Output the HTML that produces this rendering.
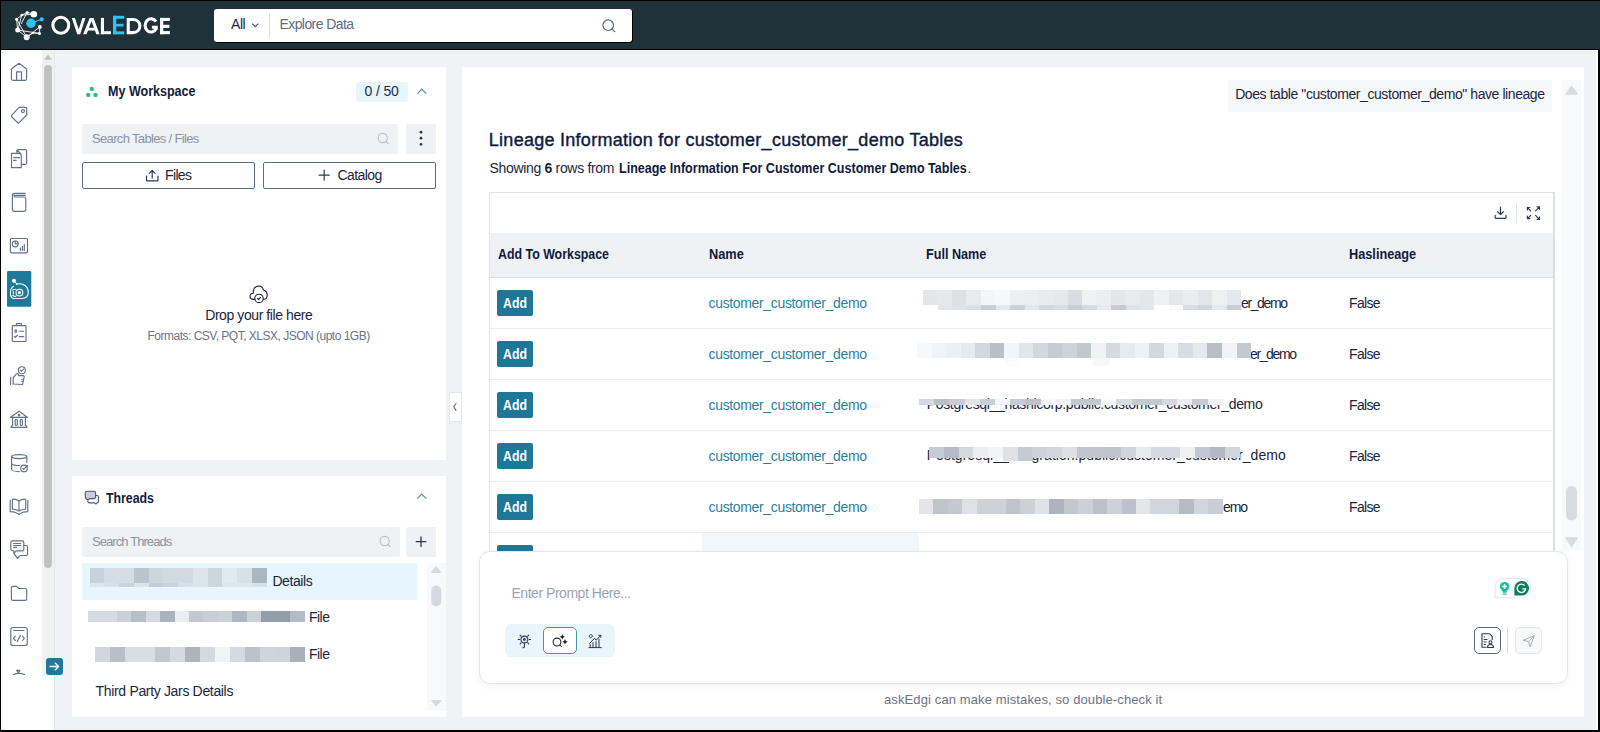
<!DOCTYPE html>
<html><head><meta charset="utf-8">
<style>
*{box-sizing:border-box;margin:0;padding:0}
html,body{width:1600px;height:732px;overflow:hidden;background:#000;font-family:"Liberation Sans",sans-serif;color:#1b2540}
.a{position:absolute}
.t{position:absolute;white-space:nowrap;line-height:normal}
svg{position:absolute;overflow:visible}
.ic{fill:none;stroke:#64718b;stroke-width:1.15;stroke-linecap:round;stroke-linejoin:round}
</style></head><body>
<div class="a" style="left:1px;top:1px;width:1599px;height:48px;background:#1f3139"></div>
<div class="a" style="left:1px;top:50px;width:1597px;height:680px;background:#f0f2f5"></div>
<div class="a" style="left:1596px;top:50px;width:2px;height:680px;background:#fff"></div>
<!-- logo -->
<svg style="left:0;top:0" width="200" height="50">
 <g stroke="#fff" stroke-width="0.9" fill="none">
  <path d="M33.8 14.3 L27.2 12.4 L21.7 15.1 L16.6 19.2 L17.7 30.1 L26.7 37.2 L33 32.9 L39.5 33.4 L39.8 26.9 M21.7 15.1 L33.8 14.3 M16.6 19.2 L26.7 37.2 M21.7 15.1 L17.7 30.1 M17.7 30.1 L39.5 33.4 M26.7 37.2 L39.8 26.9 M27.2 12.4 L21 24"/>
 </g>
 <g fill="#fff">
  <circle cx="33.8" cy="14.3" r="3.3"/><circle cx="27.2" cy="12.4" r="1.5"/><circle cx="21.7" cy="15.1" r="1.3"/>
  <circle cx="16.6" cy="19.2" r="1.5"/><circle cx="17.7" cy="30.1" r="2.5"/><circle cx="26.7" cy="37.2" r="3"/>
  <circle cx="39.8" cy="26.9" r="2"/><circle cx="39.5" cy="33.4" r="1.5"/><circle cx="33" cy="32.9" r="1.2"/>
 </g>
 <circle cx="31" cy="23.3" r="4.7" fill="#2ec4f0"/>
 <circle cx="41.7" cy="19.3" r="2.1" fill="#2ec4f0"/>
 <path d="M31 23.3 L41.7 19.3" stroke="#2ec4f0" stroke-width="1.2"/>
 <ellipse cx="60.8" cy="25.25" rx="7.95" ry="7.95" fill="none" stroke="#fff" stroke-width="3.1"/>
 <g fill="#fff">
  <path d="M71.8 17.9 H74.9 L78.7 29.3 L82.4 17.9 H85.4 L80.2 34.2 H77.2 Z"/>
  <path fill-rule="evenodd" d="M83.1 34.2 L89.7 17.9 H93.6 L99.6 34.2 H96.3 L94.9 30.4 H88 L86.5 34.2 Z M88.9 27.8 H94 L91.5 21.2 Z"/>
  <rect x="100.9" y="17.9" width="3.1" height="16.3"/><rect x="100.9" y="31.2" width="10" height="3"/>
  <rect x="160.1" y="17.9" width="3.2" height="16.3"/><rect x="160.1" y="17.9" width="9.8" height="3.1"/><rect x="160.1" y="24.8" width="9.3" height="3.2"/><rect x="160.1" y="31.1" width="9.8" height="3.1"/>
 </g>
 <g fill="none" stroke="#fff" stroke-width="3.1">
  <path d="M128.25 19.45 V32.65 H132.6 C137.3 32.65 139.85 29.8 139.85 26.05 C139.85 22.3 137.3 19.45 132.6 19.45 Z"/>
  <path d="M156 21.6 A6 6.6 0 1 0 156.25 28.8 V27.3 H151.9"/>
 </g>
 <g fill="#2ec4f0">
  <rect x="113" y="15.8" width="3.3" height="18.5"/><rect x="113" y="15.8" width="11.2" height="2.95"/><rect x="113" y="23.8" width="10.5" height="2.7"/><rect x="113" y="31.4" width="11.2" height="2.9"/>
 </g>
</svg>


<div class="a" style="left:214px;top:9px;width:418px;height:33px;background:#fff;border-radius:3px;box-shadow:1px 1px 0 #000"></div>
<svg style="left:250px;top:21px" width="10" height="8"><path d="M2.2 2.6 L5.2 5.6 L8.2 2.6" fill="none" stroke="#4a5570" stroke-width="1.1"/></svg>
<div class="a" style="left:269px;top:13px;width:1px;height:25px;background:#d8dce4"></div>
<svg style="left:600px;top:17px" width="20" height="20"><circle cx="8.2" cy="8.2" r="5.3" fill="none" stroke="#5a6782" stroke-width="1.2"/><path d="M12 12 L14.8 14.6" stroke="#5a6782" stroke-width="1.2" stroke-linecap="round"/></svg>
<div class="a" style="left:1px;top:50px;width:53px;height:680px;background:#fff"></div>
<div class="a" style="left:42px;top:50px;width:12px;height:626px;background:#f1f1f1"></div>
<div class="a" style="left:54px;top:50px;width:1px;height:680px;background:#e2e5ea"></div>
<svg style="left:42px;top:50px" width="12" height="626"><path d="M2.2 9.7 L6 4.2 L9.8 9.7 Z" fill="#c1c1c1"/><rect x="2.1" y="14.9" width="7.8" height="503" rx="3.9" fill="#c1c1c1"/></svg>
<!-- rail icons -->
<svg style="left:0;top:0" width="42" height="732">
<g class="ic">
 <g transform="translate(4,58)"><path d="M7.4 11 L15 5.3 L22.6 11 V20.8 Q22.6 22.3 21.1 22.3 H8.9 Q7.4 22.3 7.4 20.8 Z M12.6 22.3 V13.9 H17.5 V22.3"/></g>
 <g transform="translate(4,100)"><path d="M15 7.4 H21.5 Q22.7 7.4 22.7 8.6 V15 L14.3 23.4 L7.9 17 Q7.1 16.1 7.9 15.2 Z"/><circle cx="19" cy="11.1" r="1.5"/></g>
 <g transform="translate(4,143)"><path d="M7.5 10.3 H15.6 L17.3 12 V24.6 H7.5 Z M12.8 10.3 V7.8 Q12.8 6.6 14 6.6 H21.4 Q22.6 6.6 22.6 7.8 V20.1 Q22.6 21.3 21.4 21.3 H17.3 M13 7 L17 10.8 M9.6 14.6 H15.6 M9.6 17.4 H12.2"/></g>
 <g transform="translate(4,187)"><path d="M21.3 6.3 H10.4 Q8.4 6.3 8.4 8.4 V22.2 Q8.4 24.3 10.6 24.3 H19.7 Q21.8 24.3 21.8 22.2 V11.8 Q21.8 10 20 10 H11.3 Q10 10 10 8.6 Q10 7.6 11.3 8.3 H21.3"/></g>
 <g transform="translate(4,230)"><rect x="6.4" y="8.5" width="17.1" height="14.3" rx="1.3"/><circle cx="11.2" cy="13.9" r="2.9"/><path d="M11.2 11 V13.9 H14.1 M16.4 20.5 V18 M18.4 20.5 V16.3 M20.3 20.5 V14.6"/></g>
 <g transform="translate(4,318)"><rect x="8.3" y="7.6" width="13.7" height="15.9" rx="0.8"/><path d="M12.4 7.6 V5.6 H17.4 V7.6 M15.3 13.2 H19.7 M15.3 18.6 H19.7 M10.4 18.4 L11.2 19.3 L13.6 17.2"/><ellipse cx="11.7" cy="13.1" rx="0.9" ry="1.3"/></g>
 <g transform="translate(4,361)"><circle cx="17.9" cy="9.2" r="3.5"/><path d="M16.3 9.2 L17.5 10.4 L19.6 8.2 M6.6 16.2 V23.6 M9.2 16.5 L12.8 12.7 L14.4 12.7 V14.6 H19.6 L20.2 15.6 L18.6 23.5 L9.2 23 V16.5 M18.6 18.2 H17.6 M19 20.3 H17.9"/></g>
 <g transform="translate(4,404)"><path d="M6.6 13.3 L15 7.3 L23.4 13.3 Z M8.6 13.3 V21.5 Q7 21.8 7 23.3 H23 Q23 21.8 21.4 21.5 V13.3"/><rect x="11.2" y="15.2" width="2.1" height="6.3" rx="1"/><rect x="16.3" y="15.2" width="2.1" height="6.3" rx="1"/><circle cx="15" cy="11" r="0.8"/></g>
 <g transform="translate(4,448)"><ellipse cx="15.2" cy="8.6" rx="7.6" ry="2"/><path d="M7.6 8.6 V21.5 Q8 23.5 15.3 23.6 M7.6 15.8 Q9 17.5 15.4 17.5 M22.8 8.6 V14.6"/><circle cx="20" cy="20.4" r="3.3"/><path d="M18.7 20.5 L19.7 21.3 L23.4 17.5"/></g>
 <g transform="translate(4,491)"><path d="M8.4 8.2 Q12 7.8 15 10 V20 Q12 18 8.4 18.3 Z M15 10 Q18 7.8 21.7 8.2 V18.3 Q18 18 15 20 M6.2 9.3 V20.7 Q11 20.6 13.8 22.6 L15 23.4 L16.2 22.6 Q19 20.6 23.8 20.7 V9.3"/></g>
 <g transform="translate(4,534)"><path d="M8.5 6.8 H18.2 Q19.8 6.8 19.8 8.4 V15.2 Q19.8 16.8 18.2 16.8 H12.2 L9.8 19.4 V16.8 Q6.8 16.8 6.8 15 V8.5 Q6.8 6.8 8.5 6.8 Z M9.6 9.5 H16.8 M9.6 11.5 H16.8 M9.6 13.4 H12.6 M19.8 11.5 H22 Q23.5 11.5 23.5 13 V19.9 Q23.5 21.5 22 21.5 H16.3 L13.4 24.4 L10 19.4"/></g>
 <g transform="translate(4,578)"><path d="M7.4 20.8 V9.9 Q7.4 8.4 8.9 8.4 H12.5 L14.6 10.5 H21.1 Q22.7 10.5 22.7 12.1 V20.8 Q22.7 22.4 21.1 22.4 H9 Q7.4 22.4 7.4 20.8 Z"/></g>
 <g transform="translate(4,621)"><rect x="6.8" y="6.5" width="16.5" height="18" rx="2"/><path d="M9.6 9.5 H19.9 M11.4 15.2 L9.5 17.4 L11.4 19.5 M18.5 15.2 L20.3 17.4 L18.5 19.5 M16.5 14.3 L13.3 20.5"/></g>
 <g transform="translate(4,656)"><path d="M9.5 18.6 Q15 16 20.5 18.6 M12.6 14.4 H16 L14.3 16.6 Z"/></g>
</g>
<rect x="7" y="271" width="24.3" height="35.8" rx="1.2" fill="#1e7a99"/>
<g fill="none" stroke="#fff" stroke-width="1.1">
 <path d="M16 284.6 Q19.5 283 23.2 284.6 Q28.4 287 28.3 292.6 Q28.1 298.3 22 298.5 H13.8 Q10.4 298.2 10.4 293 Q10.4 287.8 14 286"/>
 <path d="M16.2 289.2 Q13 289 12.2 290.5 M16.2 296.4 Q13 296.6 12.2 295"/>
 <path d="M13.3 291.2 V294.2"/>
 <path d="M14.6 281.8 L17.2 284.2"/>
 <circle cx="14" cy="280.8" r="1.4" fill="#fff"/>
 <circle cx="19.4" cy="292.6" r="3.4"/><circle cx="19.4" cy="292.6" r="1" fill="#fff"/>
</g>
</svg>

<div class="a" style="left:46px;top:658px;width:17px;height:17px;background:#1e7a99;border-radius:3px"></div>
<svg style="left:46px;top:658px" width="17" height="17"><path d="M4 8.5 H12.5 M9.3 5.3 L12.6 8.5 L9.3 11.7" fill="none" stroke="#fff" stroke-width="1.4" stroke-linecap="round" stroke-linejoin="round"/></svg>
<div class="a" style="left:72px;top:67px;width:374px;height:393px;background:#fff"></div>
<svg style="left:80px;top:78px" width="20" height="20"><g fill="#2bbd7e"><circle cx="11.8" cy="10.9" r="2.2"/><circle cx="8.25" cy="16.9" r="2.2"/><circle cx="15.5" cy="16.9" r="2.2"/></g></svg>
<div class="a" style="left:356px;top:82px;width:52px;height:20px;background:#e6f6fc;border-radius:3px"></div>
<svg style="left:410px;top:82px" width="20" height="20"><path d="M7.4 11.7 L11.8 7.2 L16.2 11.7" fill="none" stroke="#4b91ab" stroke-width="1.2"/></svg>
<div class="a" style="left:82px;top:124px;width:316px;height:30px;background:#f0f1f4;border-radius:2px"></div>
<svg style="left:370px;top:126px" width="24" height="24"><circle cx="12.7" cy="12" r="4.6" fill="none" stroke="#b9bfca" stroke-width="1.1"/><path d="M16 15.5 L18 17.5" stroke="#b9bfca" stroke-width="1.1" stroke-linecap="round"/></svg>
<div class="a" style="left:406px;top:124px;width:30px;height:30px;background:#f0f1f4;border-radius:2px"></div>
<svg style="left:406px;top:124px" width="30" height="30"><g fill="#2a3450"><circle cx="15" cy="8.2" r="1.35"/><circle cx="15" cy="14.2" r="1.35"/><circle cx="15" cy="20.3" r="1.35"/></g></svg>
<div class="a" style="left:82px;top:162px;width:173px;height:27px;border:1px solid #5d6b88;border-radius:2px;background:#fff"></div>
<div class="a" style="left:263px;top:162px;width:173px;height:27px;border:1px solid #5d6b88;border-radius:2px;background:#fff"></div>
<svg style="left:140px;top:165px" width="24" height="22"><g fill="none" stroke="#2b3a5c" stroke-width="1.2" stroke-linecap="round" stroke-linejoin="round"><path d="M6.5 11 V15.2 Q6.5 15.9 7.2 15.9 H17.3 Q18 15.9 18 15.2 V11 M12.2 13 V5.6 M9.3 8.4 L12.2 5.5 L15.1 8.4"/></g></svg>
<svg style="left:316px;top:167px" width="16" height="16"><g stroke="#2b3a5c" stroke-width="1.2" stroke-linecap="round"><path d="M8.2 3 V13.2 M3.1 8.1 H13.3"/></g></svg>
<svg style="left:246px;top:282px" width="26" height="24"><g fill="none" stroke="#1b2540" stroke-width="1.1" stroke-linecap="round" stroke-linejoin="round"><path d="M8.6 17.4 H6.8 Q4 17.2 4 14.3 Q4 11.3 7.3 11.2 Q7 4.2 12.8 4 Q16.6 4 17.4 8 Q21.2 9.2 21.2 13.2 Q21 17.2 17.6 17.4"/><circle cx="13" cy="16.4" r="4.2"/><path d="M11.4 16.4 L12.5 17.5 L14.6 15.3"/></g></svg>
<div class="a" style="left:72px;top:476px;width:374px;height:241px;background:#fff"></div>
<svg style="left:82px;top:486px" width="20" height="22"><g fill="none" stroke="#4b5878" stroke-width="1.1" stroke-linejoin="round"><path d="M5 5.2 H12 Q13.6 5.2 13.6 6.8 V11 Q13.6 12.6 12 12.6 H7.6 L6 14 Q3.3 13 3.3 10.5 V6.8 Q3.3 5.2 5 5.2 Z" fill="#c9cfda"/><path d="M13.6 9.5 H15 Q16.5 9.5 16.5 11 V15.3 Q16.5 16.9 15 16.9 L14 18 L12.6 16.9 H7.5 Q5.7 16.9 5.6 14.6"/></g></svg>
<svg style="left:410px;top:487px" width="20" height="20"><path d="M7.4 11.7 L11.8 7.2 L16.2 11.7" fill="none" stroke="#4b91ab" stroke-width="1.2"/></svg>
<div class="a" style="left:82px;top:527px;width:318px;height:30px;background:#f0f1f4;border-radius:2px"></div>
<svg style="left:372px;top:529px" width="24" height="24"><circle cx="12.7" cy="12" r="4.6" fill="none" stroke="#b9bfca" stroke-width="1.1"/><path d="M16 15.5 L18 17.5" stroke="#b9bfca" stroke-width="1.1" stroke-linecap="round"/></svg>
<div class="a" style="left:406px;top:527px;width:30px;height:30px;background:#f0f1f4;border-radius:2px"></div>
<svg style="left:406px;top:527px" width="30" height="30"><g stroke="#2b3a5c" stroke-width="1.3" stroke-linecap="round"><path d="M15 10 V19.5 M10.2 14.7 H19.8"/></g></svg>
<div class="a" style="left:82px;top:563px;width:335px;height:37px;background:#e6f6fc"></div>
<div class="a" style="left:427px;top:563px;width:19px;height:148px;background:#f8f9fa"></div>
<svg style="left:427px;top:563px" width="19" height="148"><path d="M4.5 9.5 L9.2 3.8 L13.9 9.5 Z" fill="#d5d9df" stroke="#d5d9df" stroke-width="1" stroke-linejoin="round"/><rect x="4.2" y="22.5" width="10" height="21" rx="5" fill="#d5d9df"/><path d="M4.5 137.5 L9.2 143.2 L13.9 137.5 Z" fill="#d5d9df" stroke="#d5d9df" stroke-width="1" stroke-linejoin="round"/></svg>
<div class="a" style="left:449px;top:392px;width:13px;height:30px;background:#fff;border:1px solid #e4e7ec"></div>
<svg style="left:449px;top:392px" width="13" height="30"><path d="M7.3 11 L4.7 14.8 L7.3 18.6" fill="none" stroke="#5d6b8a" stroke-width="1.1"/></svg>
<div class="a" style="left:462px;top:67px;width:1122px;height:650px;background:#fff"></div>
<div class="a" style="left:1228px;top:80px;width:324px;height:32px;background:#f7f8fa"></div>
<div class="a" style="left:489px;top:192px;width:1066px;height:370px;border:1px solid #dfe3e8;border-right:2px solid #dcdfe4;border-bottom:none"></div>
<svg style="left:1485px;top:198px" width="70" height="32"><g fill="none" stroke="#2b3a5c" stroke-width="1.2" stroke-linecap="round" stroke-linejoin="round"><path d="M15.5 9.2 V16.5 M12.6 13.6 L15.5 16.5 L18.4 13.6 M10.2 17.4 V19.6 Q10.2 20.3 10.9 20.3 H20.3 Q21 20.3 21 19.6 V17.4"/><path d="M45.7 12.9 L42.4 9.5 M42.4 9.5 V12 M42.4 9.5 H44.9 M50.5 12.9 L54.5 8.8 M54.5 8.8 V11.3 M54.5 8.8 H52 M45.7 17.3 L42.4 20.6 M42.4 20.6 V18.1 M42.4 20.6 H44.9 M50.5 17.3 L54.5 21.3 M54.5 21.3 V18.8 M54.5 21.3 H52"/></g></svg>
<div class="a" style="left:1516px;top:203px;width:1px;height:20px;background:#e3e6ea"></div>
<div class="a" style="left:490px;top:233px;width:1063px;height:45px;background:#f0f1f4;border-bottom:1px solid #dde1e7"></div>
<div class="a" style="left:497px;top:290px;width:36px;height:26px;background:#1e7797;border-radius:2px"></div>
<div class="a" style="left:490px;top:328px;width:1064px;height:1px;background:#e9ecf0"></div>
<div class="a" style="left:497px;top:341px;width:36px;height:26px;background:#1e7797;border-radius:2px"></div>
<div class="a" style="left:490px;top:379px;width:1064px;height:1px;background:#e9ecf0"></div>
<div class="a" style="left:497px;top:392px;width:36px;height:26px;background:#1e7797;border-radius:2px"></div>
<div class="a" style="left:490px;top:430px;width:1064px;height:1px;background:#e9ecf0"></div>
<div class="a" style="left:497px;top:443px;width:36px;height:26px;background:#1e7797;border-radius:2px"></div>
<div class="a" style="left:490px;top:481px;width:1064px;height:1px;background:#e9ecf0"></div>
<div class="a" style="left:497px;top:494px;width:36px;height:26px;background:#1e7797;border-radius:2px"></div>
<div class="a" style="left:490px;top:532px;width:1064px;height:1px;background:#e9ecf0"></div>
<div class="a" style="left:702px;top:533px;width:217px;height:18px;background:#f0f8fb"></div>
<div class="a" style="left:497px;top:545px;width:36px;height:10px;background:#1e7797;border-radius:2px"></div>
<div class="a" style="left:1562px;top:80px;width:19px;height:471px;background:#f8f9fa"></div>
<svg style="left:1562px;top:80px" width="19" height="471"><g fill="#d8dbe0" stroke="#d8dbe0" stroke-width="1.5" stroke-linejoin="round"><path d="M4 14 L9.5 6.8 L15 14 Z"/><path d="M4 458 L9.5 466 L15 458 Z"/></g><rect x="4" y="406" width="11" height="34.4" rx="5.5" fill="#d8dbe0"/></svg>
<div class="a" style="left:479px;top:551px;width:1089px;height:133px;background:#fff;border:1px solid #e3e6eb;border-radius:11px;box-shadow:0 2px 8px rgba(0,0,0,0.05)"></div>
<div class="a" style="left:505px;top:624.4px;width:110px;height:33px;background:#e8f6fc;border-radius:6px"></div>
<div class="a" style="left:543px;top:627.4px;width:34px;height:26.4px;background:#fff;border:1.3px solid #4a93ad;border-radius:5px"></div>
<svg style="left:500px;top:618px" width="120" height="46"><g fill="none" stroke="#2b3a5c" stroke-width="1.1" stroke-linecap="round">
<circle cx="24.4" cy="21.5" r="3.4"/><circle cx="24.4" cy="21.5" r="0.9"/><path d="M24.4 25 V28.5 Q24.4 30 23 29.6 M18.2 21.5 H19.6 M29.2 21.5 H30.6 M20.1 17.2 L21 18.2 M28.7 17.2 L27.8 18.2 M20.1 25.8 L21 24.8 M28.7 25.8 L27.8 24.8"/>
</g>
<g fill="none" stroke="#222" stroke-width="1.05" stroke-linecap="round"><circle cx="57" cy="24" r="3.9"/><path d="M60 27 L61.5 28.5"/></g>
<g fill="#222"><path d="M62.3 16 L63.2 17.9 L65 18.8 L63.2 19.7 L62.3 21.6 L61.4 19.7 L59.6 18.8 L61.4 17.9 Z"/><path d="M65 21 L65.9 22.9 L67.7 23.8 L65.9 24.7 L65 26.6 L64.1 24.7 L62.3 23.8 L64.1 22.9 Z"/></g>
<g fill="none" stroke="#2b3a5c" stroke-width="1" stroke-linecap="round" stroke-linejoin="round"><path d="M89 29.6 H101.3 M90.2 29.6 V26.6 M93 29.6 V24.5 M96 29.6 V23.5 M99 29.6 V21 M89.5 25.5 L94.5 20.3 L96.2 22.2 L100.8 17.3 M98.7 17.3 H100.8 V19.4"/><path d="M89.2 18 L91 16.4 L92.8 18 L91 19.6 Z"/></g>
</svg>
<svg style="left:1490px;top:574px" width="48" height="30"><path d="M5 24 V14 Q5 4.4 14.6 4.4 H30.8 Q40.6 4.4 40.6 14 Q40.6 23.9 30.8 23.9 Z" fill="#fff" stroke="#dde1e6" stroke-width="0.8"/>
<circle cx="14.6" cy="12.6" r="4.7" fill="#15c39a"/><path d="M12 16 L13 18.8 H16.2 L17.2 16 Z" fill="#15c39a"/><rect x="12.6" y="19.5" width="4" height="1.2" fill="#15c39a"/><path d="M14.6 10.3 V14.9 M12.3 12.6 H16.9" stroke="#fff" stroke-width="1.5"/>
<path d="M24.4 21.6 V14.2 A7.3 7.3 0 1 1 31.7 21.6 Z" fill="#0e7e5e"/><path d="M34.6 11.5 A4.2 4.2 0 1 0 35.6 14.8 H32.3" fill="none" stroke="#fff" stroke-width="1.3"/></svg>
<div class="a" style="left:1474px;top:627px;width:27px;height:27px;border:1.3px solid #5b6885;border-radius:5px;background:#fff"></div>
<svg style="left:1474px;top:627px" width="27" height="27"><g fill="none" stroke="#2b3a5c" stroke-width="1.1" stroke-linejoin="round"><path d="M15.8 6.8 H8 V20.3 H12.5 M15.8 6.8 L18.2 9.4 V13"/><path d="M9.7 10 H11 M9.7 12.5 H13.5 M9.7 15 H12.5 M9.7 17.5 H12"/><circle cx="16.5" cy="15.3" r="1.5"/><path d="M13.5 20.5 Q13.5 17.5 16.5 17.5 Q19.5 17.5 19.5 20.5 Z"/></g></svg>
<div class="a" style="left:1507px;top:627px;width:1px;height:27px;background:#d8dce3"></div>
<div class="a" style="left:1515.4px;top:627px;width:26.2px;height:26.7px;border:1px solid #e2e5ea;border-radius:5px;background:#f8f9fb"></div>
<svg style="left:1515px;top:627px" width="27" height="27"><path d="M8 13.3 L19.3 8.7 L15 20 L13.6 14.6 Z M13.6 14.6 L19.3 8.7" fill="none" stroke="#a9b0bd" stroke-width="1" stroke-linejoin="round"/></svg>
<div class="t" style="left:231px;top:16.12px;font-size:14px;color:#1b2540;letter-spacing:-0.431px;">All</div>
<div class="t" style="left:279.5px;top:16.12px;font-size:14px;color:#5f6b85;letter-spacing:-0.585px;">Explore Data</div>
<div class="t" style="left:108px;top:83.12px;font-size:14px;color:#0f1b3d;font-weight:700;transform:scaleX(0.8949);transform-origin:0 0;">My Workspace</div>
<div class="t" style="left:364.6px;top:83.02px;font-size:14px;color:#1b2b4b;letter-spacing:-0.166px;">0 / 50</div>
<div class="t" style="left:92px;top:131.04px;font-size:13px;color:#8a93a6;letter-spacing:-0.657px;">Search Tables / Files</div>
<div class="t" style="left:165px;top:167.12px;font-size:14px;color:#1b2540;letter-spacing:-0.641px;">Files</div>
<div class="t" style="left:337.4px;top:167.12px;font-size:14px;color:#1b2540;letter-spacing:-0.544px;">Catalog</div>
<div class="t" style="left:205.2px;top:306.72px;font-size:14px;color:#1b2540;letter-spacing:-0.421px;">Drop your file here</div>
<div class="t" style="left:147.5px;top:328.86px;font-size:12px;color:#6b7489;letter-spacing:-0.503px;">Formats: CSV, PQT, XLSX, JSON (upto 1GB)</div>
<div class="t" style="left:105.9px;top:489.92px;font-size:14px;color:#0f1b3d;font-weight:700;transform:scaleX(0.8794);transform-origin:0 0;">Threads</div>
<div class="t" style="left:92px;top:534.14px;font-size:13px;color:#8a93a6;letter-spacing:-0.920px;">Search Threads</div>
<div class="t" style="left:272.4px;top:573.12px;font-size:14px;color:#1b2540;letter-spacing:-0.416px;">Details</div>
<div class="t" style="left:309px;top:609.12px;font-size:14px;color:#1b2540;letter-spacing:-0.521px;">File</div>
<div class="t" style="left:309px;top:646.12px;font-size:14px;color:#1b2540;letter-spacing:-0.521px;">File</div>
<div class="t" style="left:95.6px;top:682.62px;font-size:14px;color:#1b2540;letter-spacing:-0.334px;">Third Party Jars Details</div>
<div class="t" style="left:1235.2px;top:86.12px;font-size:14px;color:#1b2540;letter-spacing:-0.425px;">Does table "customer_customer_demo" have lineage</div>
<div class="t" style="left:488.8px;top:130.44px;font-size:18px;color:#0f1b3d;letter-spacing:0.271px;-webkit-text-stroke:0.4px #0f1b3d;">Lineage Information for customer_customer_demo Tables</div>
<div class="t" style="left:489.5px;top:159.92px;font-size:14px;color:#1b2540;letter-spacing:-0.324px;">Showing <b>6</b> rows from</div>
<div class="t" style="left:619.1px;top:159.92px;font-size:14px;color:#0f1b3d;font-weight:700;transform:scaleX(0.8948);transform-origin:0 0;">Lineage Information For Customer Customer Demo Tables</div>
<div class="t" style="left:967.5px;top:159.92px;font-size:14px;color:#1b2540;">.</div>
<div class="t" style="left:497.8px;top:246.42px;font-size:14px;color:#0f1b3d;font-weight:700;transform:scaleX(0.8844);transform-origin:0 0;">Add To Workspace</div>
<div class="t" style="left:708.6px;top:246.42px;font-size:14px;color:#0f1b3d;font-weight:700;transform:scaleX(0.9124);transform-origin:0 0;">Name</div>
<div class="t" style="left:926.4px;top:246.42px;font-size:14px;color:#0f1b3d;font-weight:700;transform:scaleX(0.8998);transform-origin:0 0;">Full Name</div>
<div class="t" style="left:1348.8px;top:246.42px;font-size:14px;color:#0f1b3d;font-weight:700;transform:scaleX(0.9089);transform-origin:0 0;">Haslineage</div>
<div class="t" style="left:503px;top:294.72px;font-size:14px;color:#ffffff;font-weight:700;transform:scaleX(0.8781);transform-origin:0 0;">Add</div>
<div class="t" style="left:708.6px;top:294.72px;font-size:14px;color:#2d7fa0;letter-spacing:-0.350px;">customer_customer_demo</div>
<div class="t" style="left:1349px;top:294.72px;font-size:14px;color:#1b2540;letter-spacing:-0.659px;">False</div>
<div class="t" style="left:503px;top:345.72px;font-size:14px;color:#ffffff;font-weight:700;transform:scaleX(0.8781);transform-origin:0 0;">Add</div>
<div class="t" style="left:708.6px;top:345.72px;font-size:14px;color:#2d7fa0;letter-spacing:-0.350px;">customer_customer_demo</div>
<div class="t" style="left:1349px;top:345.72px;font-size:14px;color:#1b2540;letter-spacing:-0.659px;">False</div>
<div class="t" style="left:503px;top:396.72px;font-size:14px;color:#ffffff;font-weight:700;transform:scaleX(0.8781);transform-origin:0 0;">Add</div>
<div class="t" style="left:708.6px;top:396.72px;font-size:14px;color:#2d7fa0;letter-spacing:-0.350px;">customer_customer_demo</div>
<div class="t" style="left:1349px;top:396.72px;font-size:14px;color:#1b2540;letter-spacing:-0.659px;">False</div>
<div class="t" style="left:503px;top:447.72px;font-size:14px;color:#ffffff;font-weight:700;transform:scaleX(0.8781);transform-origin:0 0;">Add</div>
<div class="t" style="left:708.6px;top:447.72px;font-size:14px;color:#2d7fa0;letter-spacing:-0.350px;">customer_customer_demo</div>
<div class="t" style="left:1349px;top:447.72px;font-size:14px;color:#1b2540;letter-spacing:-0.659px;">False</div>
<div class="t" style="left:503px;top:498.72px;font-size:14px;color:#ffffff;font-weight:700;transform:scaleX(0.8781);transform-origin:0 0;">Add</div>
<div class="t" style="left:708.6px;top:498.72px;font-size:14px;color:#2d7fa0;letter-spacing:-0.350px;">customer_customer_demo</div>
<div class="t" style="left:1349px;top:498.72px;font-size:14px;color:#1b2540;letter-spacing:-0.659px;">False</div>
<div class="t" style="left:1241px;top:294.72px;font-size:14px;color:#1b2540;letter-spacing:-1.378px;">er_demo</div>
<div class="t" style="left:1250px;top:345.72px;font-size:14px;color:#1b2540;letter-spacing:-1.378px;">er_demo</div>
<div class="t" style="left:926.7px;top:396.42px;font-size:14px;color:#1b2540;letter-spacing:-0.330px;">Postgresql__hashicorp.public.customer_customer_demo</div>
<div class="t" style="left:926.7px;top:447.12px;font-size:14px;color:#1b2540;letter-spacing:0.035px;">Postgresql__integration.public.customer_customer_demo</div>
<div class="t" style="left:1223px;top:498.72px;font-size:14px;color:#1b2540;letter-spacing:-1.117px;">emo</div>
<div class="t" style="left:511.5px;top:585.12px;font-size:14px;color:#9aa3b5;letter-spacing:-0.468px;">Enter Prompt Here...</div>
<div class="t" style="left:884px;top:692.44px;font-size:13px;color:#6b7489;letter-spacing:0.115px;">askEdgi can make mistakes, so double-check it</div>
<div class="a" style="left:923.00px;top:290px;width:14.75px;height:15px;background:#e2e5e9"></div><div class="a" style="left:937.45px;top:290px;width:14.75px;height:15px;background:#e5e7eb"></div><div class="a" style="left:951.91px;top:290px;width:14.75px;height:15px;background:#dde0e5"></div><div class="a" style="left:966.36px;top:290px;width:14.75px;height:15px;background:#e8eaed"></div><div class="a" style="left:980.82px;top:290px;width:14.75px;height:15px;background:#f4f5f7"></div><div class="a" style="left:995.27px;top:290px;width:14.75px;height:15px;background:#f7f8f9"></div><div class="a" style="left:1009.73px;top:290px;width:14.75px;height:15px;background:#eeeff2"></div><div class="a" style="left:1024.18px;top:290px;width:14.75px;height:15px;background:#ebedf0"></div><div class="a" style="left:1038.64px;top:290px;width:14.75px;height:15px;background:#e8eaee"></div><div class="a" style="left:1053.09px;top:290px;width:14.75px;height:15px;background:#e6e8ec"></div><div class="a" style="left:1067.55px;top:290px;width:14.75px;height:15px;background:#d9dce2"></div><div class="a" style="left:1082.00px;top:290px;width:14.75px;height:15px;background:#f0f1f3"></div><div class="a" style="left:1096.45px;top:290px;width:14.75px;height:15px;background:#ebedf0"></div><div class="a" style="left:1110.91px;top:290px;width:14.75px;height:15px;background:#e3e5e9"></div><div class="a" style="left:1125.36px;top:290px;width:14.75px;height:15px;background:#e8eaed"></div><div class="a" style="left:1139.82px;top:290px;width:14.75px;height:15px;background:#e4e6ea"></div><div class="a" style="left:1154.27px;top:290px;width:14.75px;height:15px;background:#eff0f2"></div><div class="a" style="left:1168.73px;top:290px;width:14.75px;height:15px;background:#e4e7eb"></div><div class="a" style="left:1183.18px;top:290px;width:14.75px;height:15px;background:#eaecef"></div><div class="a" style="left:1197.64px;top:290px;width:14.75px;height:15px;background:#e3e6ea"></div><div class="a" style="left:1212.09px;top:290px;width:14.75px;height:15px;background:#eef0f2"></div><div class="a" style="left:1226.55px;top:290px;width:14.75px;height:15px;background:#e5e8ec"></div>
<div class="a" style="left:938.00px;top:305px;width:14.73px;height:5px;background:#e4e6ea"></div><div class="a" style="left:952.43px;top:305px;width:14.73px;height:5px;background:#dfe2e6"></div><div class="a" style="left:966.86px;top:305px;width:14.73px;height:5px;background:#dce0e5"></div><div class="a" style="left:981.29px;top:305px;width:14.73px;height:5px;background:#c8cdd6"></div><div class="a" style="left:995.71px;top:305px;width:14.73px;height:5px;background:#e6e8ec"></div><div class="a" style="left:1010.14px;top:305px;width:14.73px;height:5px;background:#cdd2da"></div><div class="a" style="left:1024.57px;top:305px;width:14.73px;height:5px;background:#e3e6ea"></div><div class="a" style="left:1039.00px;top:305px;width:14.73px;height:5px;background:#d4d8df"></div><div class="a" style="left:1053.43px;top:305px;width:14.73px;height:5px;background:#dadde3"></div><div class="a" style="left:1067.86px;top:305px;width:14.73px;height:5px;background:#c9ced7"></div><div class="a" style="left:1082.29px;top:305px;width:14.73px;height:5px;background:#d8dce2"></div><div class="a" style="left:1096.71px;top:305px;width:14.73px;height:5px;background:#e8eaed"></div><div class="a" style="left:1111.14px;top:305px;width:14.73px;height:5px;background:#c5cad3"></div><div class="a" style="left:1125.57px;top:305px;width:14.73px;height:5px;background:#dfe2e7"></div><div class="a" style="left:1140.00px;top:305px;width:14.73px;height:5px;background:#e4e7ea"></div><div class="a" style="left:1154.43px;top:305px;width:14.73px;height:5px;background:#ffffff"></div><div class="a" style="left:1168.86px;top:305px;width:14.73px;height:5px;background:#fbfbfc"></div><div class="a" style="left:1183.29px;top:305px;width:14.73px;height:5px;background:#d9dce2"></div><div class="a" style="left:1197.71px;top:305px;width:14.73px;height:5px;background:#d2d6dd"></div><div class="a" style="left:1212.14px;top:305px;width:14.73px;height:5px;background:#e6e8ec"></div><div class="a" style="left:1226.57px;top:305px;width:14.73px;height:5px;background:#c9ced6"></div>
<div class="a" style="left:917.40px;top:343px;width:14.80px;height:15px;background:#f7f8f9"></div><div class="a" style="left:931.90px;top:343px;width:14.80px;height:15px;background:#f2f3f5"></div><div class="a" style="left:946.41px;top:343px;width:14.80px;height:15px;background:#eeeff2"></div><div class="a" style="left:960.91px;top:343px;width:14.80px;height:15px;background:#e7e9ec"></div><div class="a" style="left:975.42px;top:343px;width:14.80px;height:15px;background:#d4d8de"></div><div class="a" style="left:989.92px;top:343px;width:14.80px;height:15px;background:#b9bfc9"></div><div class="a" style="left:1004.43px;top:343px;width:14.80px;height:15px;background:#f4f5f6"></div><div class="a" style="left:1018.93px;top:343px;width:14.80px;height:15px;background:#e3e5e9"></div><div class="a" style="left:1033.43px;top:343px;width:14.80px;height:15px;background:#d4d8de"></div><div class="a" style="left:1047.94px;top:343px;width:14.80px;height:15px;background:#c7ccd4"></div><div class="a" style="left:1062.44px;top:343px;width:14.80px;height:15px;background:#ced2d9"></div><div class="a" style="left:1076.95px;top:343px;width:14.80px;height:15px;background:#c2c7d0"></div><div class="a" style="left:1091.45px;top:343px;width:14.80px;height:15px;background:#f1f2f4"></div><div class="a" style="left:1105.96px;top:343px;width:14.80px;height:15px;background:#d6d9df"></div><div class="a" style="left:1120.46px;top:343px;width:14.80px;height:15px;background:#e8eaed"></div><div class="a" style="left:1134.97px;top:343px;width:14.80px;height:15px;background:#f0f1f3"></div><div class="a" style="left:1149.47px;top:343px;width:14.80px;height:15px;background:#d4d8de"></div><div class="a" style="left:1163.97px;top:343px;width:14.80px;height:15px;background:#eff0f2"></div><div class="a" style="left:1178.48px;top:343px;width:14.80px;height:15px;background:#d9dce2"></div><div class="a" style="left:1192.98px;top:343px;width:14.80px;height:15px;background:#e6e8eb"></div><div class="a" style="left:1207.49px;top:343px;width:14.80px;height:15px;background:#b8bec8"></div><div class="a" style="left:1221.99px;top:343px;width:14.80px;height:15px;background:#f2f3f5"></div><div class="a" style="left:1236.50px;top:343px;width:14.80px;height:15px;background:#c4c9d1"></div>
<div class="a" style="left:1005.00px;top:358px;width:12.30px;height:8px;background:#fafbfb"></div>
<div class="a" style="left:1094.00px;top:358px;width:16.30px;height:8px;background:#f6f7f8"></div>
<div class="a" style="left:919.00px;top:399px;width:15.49px;height:5.800000000000011px;background:#d5d9df"></div><div class="a" style="left:934.19px;top:399px;width:15.49px;height:5.800000000000011px;background:#b9bfc9"></div><div class="a" style="left:949.38px;top:399px;width:15.49px;height:5.800000000000011px;background:#c8cdd5"></div><div class="a" style="left:964.57px;top:399px;width:15.49px;height:5.800000000000011px;background:#e4e6ea"></div><div class="a" style="left:979.76px;top:399px;width:15.49px;height:5.800000000000011px;background:#c9ced6"></div><div class="a" style="left:994.95px;top:399px;width:15.49px;height:5.800000000000011px;background:#f6f7f8"></div><div class="a" style="left:1010.14px;top:399px;width:15.49px;height:5.800000000000011px;background:#c8ccd4"></div><div class="a" style="left:1025.33px;top:399px;width:15.49px;height:5.800000000000011px;background:#bcc1cb"></div><div class="a" style="left:1040.52px;top:399px;width:15.49px;height:5.800000000000011px;background:#f8f9fa"></div><div class="a" style="left:1055.71px;top:399px;width:15.49px;height:5.800000000000011px;background:#f0f1f3"></div><div class="a" style="left:1070.90px;top:399px;width:15.49px;height:5.800000000000011px;background:#c2c7d0"></div><div class="a" style="left:1086.09px;top:399px;width:15.49px;height:5.800000000000011px;background:#c2c7d0"></div><div class="a" style="left:1101.28px;top:399px;width:15.49px;height:5.800000000000011px;background:#fafbfb"></div><div class="a" style="left:1116.47px;top:399px;width:15.49px;height:5.800000000000011px;background:#d9dce2"></div><div class="a" style="left:1131.66px;top:399px;width:15.49px;height:5.800000000000011px;background:#c5cad2"></div><div class="a" style="left:1146.85px;top:399px;width:15.49px;height:5.800000000000011px;background:#c3c8d0"></div><div class="a" style="left:1162.04px;top:399px;width:15.49px;height:5.800000000000011px;background:#d5d9df"></div><div class="a" style="left:1177.23px;top:399px;width:15.49px;height:5.800000000000011px;background:#eceef0"></div><div class="a" style="left:1192.42px;top:399px;width:15.49px;height:5.800000000000011px;background:#c7ccd4"></div><div class="a" style="left:1207.61px;top:399px;width:15.49px;height:5.800000000000011px;background:#f0f1f3"></div>
<div class="a" style="left:929.00px;top:447px;width:15.08px;height:10.600000000000023px;background:#c7ccd4"></div><div class="a" style="left:943.78px;top:447px;width:15.08px;height:10.600000000000023px;background:#b6bcc6"></div><div class="a" style="left:958.56px;top:447px;width:15.08px;height:10.600000000000023px;background:#d5d8de"></div><div class="a" style="left:973.34px;top:447px;width:15.08px;height:10.600000000000023px;background:#eceef0"></div><div class="a" style="left:988.12px;top:447px;width:15.08px;height:10.600000000000023px;background:#f3f4f5"></div><div class="a" style="left:1002.90px;top:447px;width:15.08px;height:10.600000000000023px;background:#dfe1e5"></div><div class="a" style="left:1017.69px;top:447px;width:15.08px;height:10.600000000000023px;background:#c6cbd3"></div><div class="a" style="left:1032.47px;top:447px;width:15.08px;height:10.600000000000023px;background:#cdd1d8"></div><div class="a" style="left:1047.25px;top:447px;width:15.08px;height:10.600000000000023px;background:#d3d6dc"></div><div class="a" style="left:1062.03px;top:447px;width:15.08px;height:10.600000000000023px;background:#dde0e5"></div><div class="a" style="left:1076.81px;top:447px;width:15.08px;height:10.600000000000023px;background:#c0c5ce"></div><div class="a" style="left:1091.59px;top:447px;width:15.08px;height:10.600000000000023px;background:#c0c5ce"></div><div class="a" style="left:1106.37px;top:447px;width:15.08px;height:10.600000000000023px;background:#bfc4cd"></div><div class="a" style="left:1121.15px;top:447px;width:15.08px;height:10.600000000000023px;background:#d0d4db"></div><div class="a" style="left:1135.93px;top:447px;width:15.08px;height:10.600000000000023px;background:#e8eaed"></div><div class="a" style="left:1150.71px;top:447px;width:15.08px;height:10.600000000000023px;background:#d6d9df"></div><div class="a" style="left:1165.50px;top:447px;width:15.08px;height:10.600000000000023px;background:#d6d9df"></div><div class="a" style="left:1180.28px;top:447px;width:15.08px;height:10.600000000000023px;background:#eef0f2"></div><div class="a" style="left:1195.06px;top:447px;width:15.08px;height:10.600000000000023px;background:#c3c8d0"></div><div class="a" style="left:1209.84px;top:447px;width:15.08px;height:10.600000000000023px;background:#b3b9c3"></div><div class="a" style="left:1224.62px;top:447px;width:15.08px;height:10.600000000000023px;background:#d1d5dc"></div>
<div class="a" style="left:1003.00px;top:457.6px;width:15.05px;height:3.3999999999999773px;background:#dde0e5"></div><div class="a" style="left:1017.75px;top:457.6px;width:15.05px;height:3.3999999999999773px;background:#c3c8d0"></div>
<div class="a" style="left:919.00px;top:499px;width:14.77px;height:15px;background:#e3e5e9"></div><div class="a" style="left:933.47px;top:499px;width:14.77px;height:15px;background:#bfc4cd"></div><div class="a" style="left:947.93px;top:499px;width:14.77px;height:15px;background:#c4c9d1"></div><div class="a" style="left:962.40px;top:499px;width:14.77px;height:15px;background:#dee1e5"></div><div class="a" style="left:976.87px;top:499px;width:14.77px;height:15px;background:#cdd1d8"></div><div class="a" style="left:991.33px;top:499px;width:14.77px;height:15px;background:#cdd1d8"></div><div class="a" style="left:1005.80px;top:499px;width:14.77px;height:15px;background:#bfc4cd"></div><div class="a" style="left:1020.27px;top:499px;width:14.77px;height:15px;background:#ccd0d7"></div><div class="a" style="left:1034.73px;top:499px;width:14.77px;height:15px;background:#dfe2e6"></div><div class="a" style="left:1049.20px;top:499px;width:14.77px;height:15px;background:#aeb4bf"></div><div class="a" style="left:1063.67px;top:499px;width:14.77px;height:15px;background:#c3c8d0"></div><div class="a" style="left:1078.13px;top:499px;width:14.77px;height:15px;background:#ccd0d7"></div><div class="a" style="left:1092.60px;top:499px;width:14.77px;height:15px;background:#bcc1cb"></div><div class="a" style="left:1107.07px;top:499px;width:14.77px;height:15px;background:#cdd1d8"></div><div class="a" style="left:1121.53px;top:499px;width:14.77px;height:15px;background:#bcc1cb"></div><div class="a" style="left:1136.00px;top:499px;width:14.77px;height:15px;background:#e4e6ea"></div><div class="a" style="left:1150.47px;top:499px;width:14.77px;height:15px;background:#d1d5dc"></div><div class="a" style="left:1164.93px;top:499px;width:14.77px;height:15px;background:#d1d5dc"></div><div class="a" style="left:1179.40px;top:499px;width:14.77px;height:15px;background:#b5bbc5"></div><div class="a" style="left:1193.87px;top:499px;width:14.77px;height:15px;background:#d1d5dc"></div><div class="a" style="left:1208.33px;top:499px;width:14.77px;height:15px;background:#c9ced6"></div>
<div class="a" style="left:89.50px;top:568px;width:15.05px;height:15px;background:#c8d2da"></div><div class="a" style="left:104.25px;top:568px;width:15.05px;height:15px;background:#d3dde3"></div><div class="a" style="left:119.00px;top:568px;width:15.05px;height:15px;background:#d3dde3"></div><div class="a" style="left:133.75px;top:568px;width:15.05px;height:15px;background:#b8c4cf"></div><div class="a" style="left:148.50px;top:568px;width:15.05px;height:15px;background:#ccd6dd"></div><div class="a" style="left:163.25px;top:568px;width:15.05px;height:15px;background:#d0dae0"></div><div class="a" style="left:178.00px;top:568px;width:15.05px;height:15px;background:#d0dae0"></div><div class="a" style="left:192.75px;top:568px;width:15.05px;height:15px;background:#dbe5ea"></div><div class="a" style="left:207.50px;top:568px;width:15.05px;height:15px;background:#ccd6dd"></div><div class="a" style="left:222.25px;top:568px;width:15.05px;height:15px;background:#deeaef"></div><div class="a" style="left:237.00px;top:568px;width:15.05px;height:15px;background:#d5e1e7"></div><div class="a" style="left:251.75px;top:568px;width:15.05px;height:15px;background:#a9b7c3"></div>
<div class="a" style="left:89.50px;top:583px;width:15.05px;height:4px;background:#dce7ec"></div><div class="a" style="left:104.25px;top:583px;width:15.05px;height:4px;background:#d6e1e7"></div><div class="a" style="left:119.00px;top:583px;width:15.05px;height:4px;background:#c8d3da"></div><div class="a" style="left:133.75px;top:583px;width:15.05px;height:4px;background:#dae5ea"></div><div class="a" style="left:148.50px;top:583px;width:15.05px;height:4px;background:#c2cdd5"></div><div class="a" style="left:163.25px;top:583px;width:15.05px;height:4px;background:#c8d3da"></div><div class="a" style="left:178.00px;top:583px;width:15.05px;height:4px;background:#d6e1e7"></div><div class="a" style="left:192.75px;top:583px;width:15.05px;height:4px;background:#dae5ea"></div><div class="a" style="left:207.50px;top:583px;width:15.05px;height:4px;background:#cbd6dd"></div><div class="a" style="left:222.25px;top:583px;width:15.05px;height:4px;background:#dce7ec"></div><div class="a" style="left:237.00px;top:583px;width:15.05px;height:4px;background:#dce7ec"></div><div class="a" style="left:251.75px;top:583px;width:15.05px;height:4px;background:#d6e1e7"></div>
<div class="a" style="left:87.80px;top:611px;width:14.76px;height:11px;background:#d7dae0"></div><div class="a" style="left:102.26px;top:611px;width:14.76px;height:11px;background:#d7dae0"></div><div class="a" style="left:116.72px;top:611px;width:14.76px;height:11px;background:#cbcfd6"></div><div class="a" style="left:131.18px;top:611px;width:14.76px;height:11px;background:#b8bec8"></div><div class="a" style="left:145.64px;top:611px;width:14.76px;height:11px;background:#d7dae0"></div><div class="a" style="left:160.10px;top:611px;width:14.76px;height:11px;background:#abb2bd"></div><div class="a" style="left:174.56px;top:611px;width:14.76px;height:11px;background:#ecedf0"></div><div class="a" style="left:189.02px;top:611px;width:14.76px;height:11px;background:#c2c7d0"></div><div class="a" style="left:203.48px;top:611px;width:14.76px;height:11px;background:#c9ced5"></div><div class="a" style="left:217.94px;top:611px;width:14.76px;height:11px;background:#ccd0d7"></div><div class="a" style="left:232.40px;top:611px;width:14.76px;height:11px;background:#b0b6c1"></div><div class="a" style="left:246.86px;top:611px;width:14.76px;height:11px;background:#ccd0d7"></div><div class="a" style="left:261.32px;top:611px;width:14.76px;height:11px;background:#939cab"></div><div class="a" style="left:275.78px;top:611px;width:14.76px;height:11px;background:#939cab"></div><div class="a" style="left:290.24px;top:611px;width:14.76px;height:11px;background:#b5bbc5"></div>
<div class="a" style="left:95.00px;top:647px;width:15.28px;height:15px;background:#d3d6dc"></div><div class="a" style="left:109.98px;top:647px;width:15.28px;height:15px;background:#b9bfc9"></div><div class="a" style="left:124.96px;top:647px;width:15.28px;height:15px;background:#dadde2"></div><div class="a" style="left:139.94px;top:647px;width:15.28px;height:15px;background:#dadde2"></div><div class="a" style="left:154.91px;top:647px;width:15.28px;height:15px;background:#c2c7d0"></div><div class="a" style="left:169.89px;top:647px;width:15.28px;height:15px;background:#d6d9df"></div><div class="a" style="left:184.87px;top:647px;width:15.28px;height:15px;background:#adb4bf"></div><div class="a" style="left:199.85px;top:647px;width:15.28px;height:15px;background:#d6d9df"></div><div class="a" style="left:214.83px;top:647px;width:15.28px;height:15px;background:#f2f3f5"></div><div class="a" style="left:229.81px;top:647px;width:15.28px;height:15px;background:#d6d9df"></div><div class="a" style="left:244.79px;top:647px;width:15.28px;height:15px;background:#bcc1cb"></div><div class="a" style="left:259.76px;top:647px;width:15.28px;height:15px;background:#d1d4da"></div><div class="a" style="left:274.74px;top:647px;width:15.28px;height:15px;background:#cfd3da"></div><div class="a" style="left:289.72px;top:647px;width:15.28px;height:15px;background:#a9b0bb"></div>
</body></html>
